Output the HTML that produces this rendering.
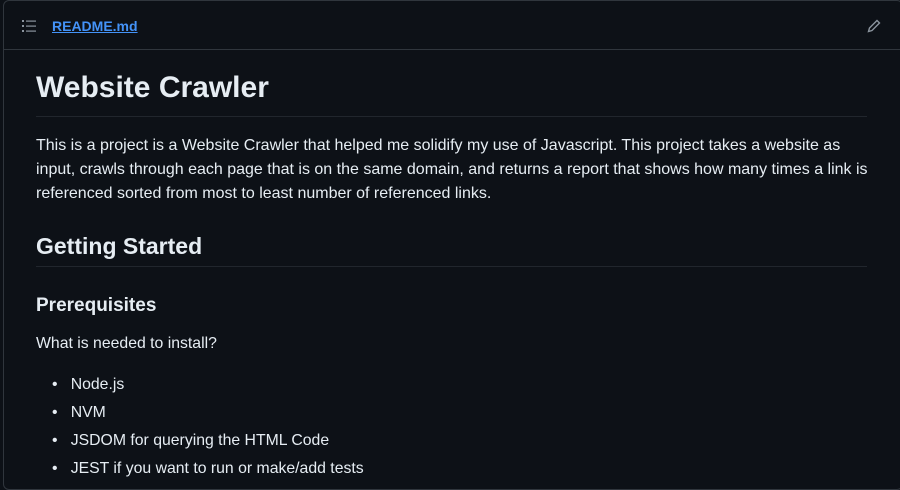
<!DOCTYPE html>
<html><head><style>
html,body{margin:0;background:#0d1117;width:900px;height:484px;overflow:hidden}
body{font-family:"Liberation Sans",sans-serif;color:#e6edf3}
.box{position:absolute;left:3px;top:0;width:900px;height:490px;border:1px solid #30363d;border-radius:6px;box-sizing:border-box}
.hdr{position:absolute;left:0;top:0;right:0;height:48px;border-bottom:1px solid #30363d}
.hdr a{position:absolute;left:48px;top:17px;color:#4493f8;font-weight:bold;font-size:14px;text-decoration:underline}
.t{position:absolute;left:32px;white-space:nowrap}
.rule{position:absolute;left:32px;width:831px;height:1px;background:#21262d}
</style></head><body>
<div class="box">
<div class="hdr">
<svg style="position:absolute;left:18px;top:18px" width="16" height="14" viewBox="0 0 16 14" fill="#8b949e"><rect x="0" y="1" width="2" height="2"/><rect x="0" y="6" width="2" height="2"/><rect x="0" y="11" width="2" height="2"/><rect x="4" y="1.5" width="10" height="1.2"/><rect x="4" y="6.5" width="10" height="1.2"/><rect x="4" y="11.5" width="10" height="1.2"/></svg>
<a>README.md</a>
<svg style="position:absolute;left:862px;top:17px" width="16" height="16" viewBox="0 0 16 16" fill="none" stroke="#8b949e" stroke-width="1.4"><path d="M11 2.5l2.5 2.5L6 12.5 2.5 13.5 3.5 10z"/></svg>
</div>
<div class="t" style="top:70px;font-size:30px;font-weight:bold">Website Crawler</div>
<div class="rule" style="top:115px"></div>
<div class="t" style="top:133px;font-size:16px;line-height:24px">This is a project is a Website Crawler that helped me solidify my use of Javascript. This project takes a website as<br>input, crawls through each page that is on the same domain, and returns a report that shows how many times a link is<br>referenced sorted from most to least number of referenced links.</div>
<div class="t" style="top:232px;font-size:23px;font-weight:bold">Getting Started</div>
<div class="rule" style="top:265px"></div>
<div class="t" style="top:294px;font-size:19px;font-weight:bold">Prerequisites</div>
<div class="t" style="top:334px;font-size:15.8px">What is needed to install?</div>
<div class="t" style="top:370px;font-size:15.8px;left:48px;line-height:28px">•&nbsp;&nbsp;&nbsp;Node.js<br>•&nbsp;&nbsp;&nbsp;NVM<br>•&nbsp;&nbsp;&nbsp;JSDOM for querying the HTML Code<br>•&nbsp;&nbsp;&nbsp;JEST if you want to run or make/add tests</div>
</div>
</body></html>
